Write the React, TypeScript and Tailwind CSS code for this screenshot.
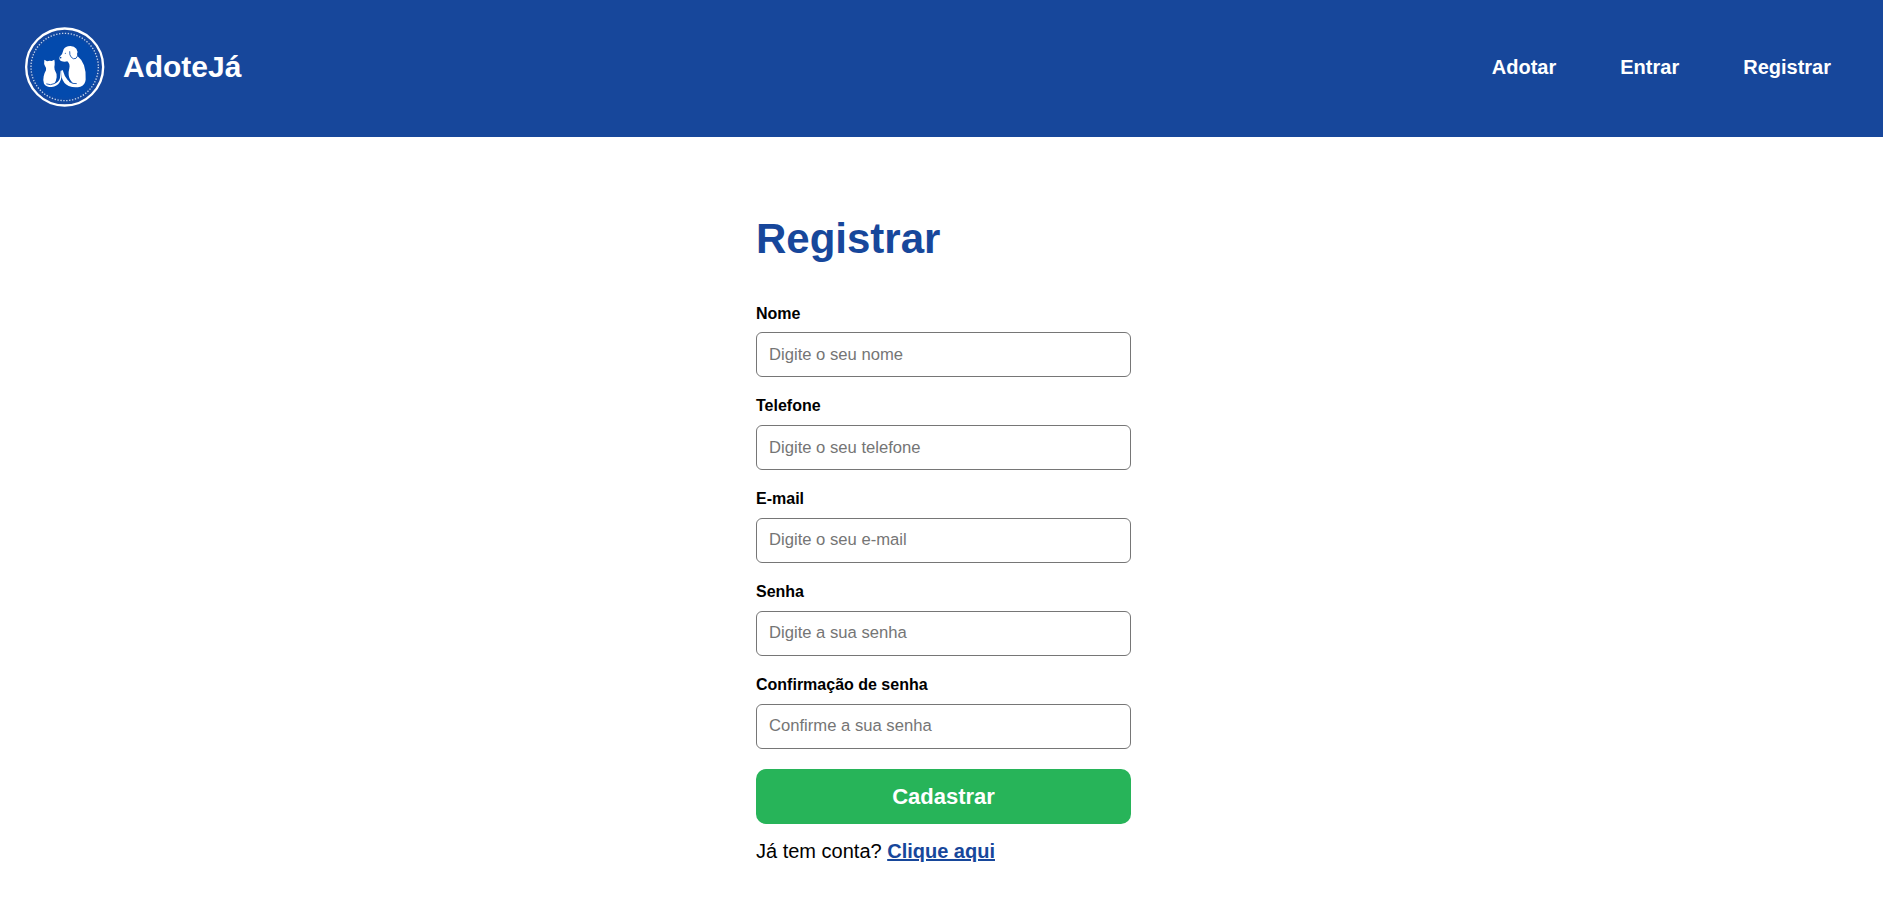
const navItems = ['Adotar', 'Entrar', 'Registrar'];

const fields = [
  { id: 'nome', label: 'Nome', placeholder: 'Digite o seu nome', type: 'text' },
  { id: 'telefone', label: 'Telefone', placeholder: 'Digite o seu telefone', type: 'tel' },
  { id: 'email', label: 'E-mail', placeholder: 'Digite o seu e-mail', type: 'email' },
  { id: 'senha', label: 'Senha', placeholder: 'Digite a sua senha', type: 'password' },
  { id: 'confirmacao', label: 'Confirmação de senha', placeholder: 'Confirme a sua senha', type: 'password' },
];

function Logo() {
  return (
    <svg className="size-20" viewBox="30 36 240 240" aria-hidden="true">
      <defs>
        <radialGradient id="disc">
          <stop offset="0.78" stopColor="#034aad" />
          <stop offset="0.96" stopColor="#17479b" />
        </radialGradient>
      </defs>
      <circle cx="149" cy="156" r="115.5" fill="url(#disc)" stroke="#fff" strokeWidth="7" />
      <circle cx="149" cy="156" r="101" fill="none" stroke="#c5d3ea" strokeWidth="4" strokeDasharray="4 4.81" />
      {/* cat */}
      <path
        fill="#fff"
        d="M88 134 L96 139 Q103 136 110 138 L118 134 Q120 142 119 149 Q117 156 119 164 Q126 175 125 187 Q124 199 117 207 Q131 203 135 189 L137 167 L140 167 Q141 190 134 202 Q126 215 110 216 Q93 216 87 206 Q83 198 86 184 Q88 174 93 166 Q95 159 90 153 Q86 147 88 134 Z"
      />
      {/* dog */}
      <path
        fill="#fff"
        d="M144 109 Q146 97 159 94 Q176 91 184 101 Q190 110 188 124 Q201 134 207 151 Q214 172 212 194 Q210 211 196 215 Q178 219 161 213 Q145 206 140 187 L139 167 L143 165 Q148 184 158 195 Q164 202 174 205 Q162 193 161 180 Q160 171 163 160 Q166 147 157 139 Q148 142 138 138 Q131 133 134 125 Q143 119 144 109 Z"
      />
      <path
        fill="none"
        stroke="#084aaa"
        strokeWidth="2.6"
        strokeLinecap="round"
        d="M164 110 Q163 121 169 127 Q175 134 183 130 Q190 124 188 114 M95 207 Q106 212 118 206 M163 200 Q173 208 184 206"
      />
      <circle cx="151" cy="115" r="1.6" fill="#084aaa" />
      <circle cx="137" cy="128" r="2.4" fill="#084aaa" />
    </svg>
  );
}

export default function App() {
  return (
    <div className="min-h-[902px] bg-white font-['Liberation_Sans',Arial,sans-serif] text-black">
      <header className="flex h-[137px] items-center justify-between bg-[#17479b] pr-[52px] pb-[3px] pl-[25px] text-white">
        <a href="#" className="flex items-center gap-[18px]">
          <Logo />
          <span className="text-[30px] leading-9 font-bold">AdoteJá</span>
        </a>
        <nav className="flex gap-16 text-xl font-bold">
          {navItems.map((item) => (
            <a key={item} href="#">
              {item}
            </a>
          ))}
        </nav>
      </header>
      <main className="ml-[756px] w-[375px] pt-[78px]">
        <h1 className="text-[42px] leading-12 font-bold text-[#17479b]">Registrar</h1>
        <form className="mt-[38.6px]">
          {fields.map((f) => (
            <div key={f.id} className="mb-[17px] flex flex-col">
              <label htmlFor={f.id} className="mb-[6.8px] text-base font-bold">
                {f.label}
              </label>
              <input
                id={f.id}
                type={f.type}
                placeholder={f.placeholder}
                className="h-[45px] rounded-md border border-[#767676] px-3 text-[16.64px] placeholder:text-[#757575]"
              />
            </div>
          ))}
          <button type="button" className="mt-[3.4px] h-[55px] w-full rounded-[10px] bg-[#27b459] text-[22px] font-bold text-white">
            Cadastrar
          </button>
        </form>
        <p className="mt-[13px] text-xl">
          Já tem conta?{' '}
          <a href="#" className="font-bold text-[#17479b] underline">
            Clique aqui
          </a>
        </p>
      </main>
    </div>
  );
}
